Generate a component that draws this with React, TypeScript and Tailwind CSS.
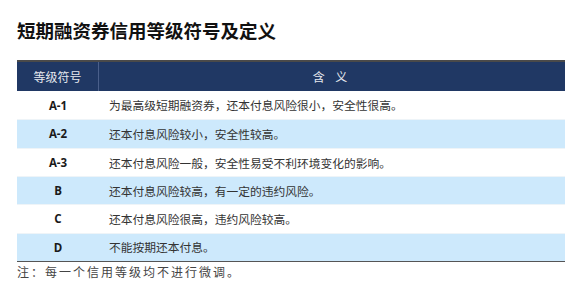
import React from "react";

const rows = [
  { g: "A-1", d: "为最高级短期融资券，还本付息风险很小，安全性很高。" },
  { g: "A-2", d: "还本付息风险较小，安全性较高。" },
  { g: "A-3", d: "还本付息风险一般，安全性易受不利环境变化的影响。" },
  { g: "B", d: "还本付息风险较高，有一定的违约风险。" },
  { g: "C", d: "还本付息风险很高，违约风险较高。" },
  { g: "D", d: "不能按期还本付息。" },
];

const cjk = { fontFamily: '"Noto Sans CJK SC", "Noto Sans", sans-serif' };

export default function App() {
  return (
    <div className="w-[584px] h-[288px] bg-white overflow-hidden" style={cjk}>
      <div className="pl-[17px] pt-[17px] h-[60px]">
        <h1 className="text-[18.5px] leading-[26px] font-bold text-[#111]">短期融资券信用等级符号及定义</h1>
      </div>
      <div className="ml-[17px] w-[548px] border-t-2 border-[#4a4a4a]">
        <div className="flex h-[29px] bg-[#203864] text-[#e6e9ef] text-[12px]">
          <div className="w-[82px] border-r border-[#4a5f8a] flex items-center justify-center">等级符号</div>
          <div className="flex-1 flex items-center justify-center tracking-[4px]">含 义</div>
        </div>
        {rows.map((r, i) => (
          <div
            key={r.g}
            className={`flex h-[28.33px] ${i % 2 === 1 ? "bg-[#cde9fc]" : "bg-white"} ${i > 0 ? "border-t border-[#eef4f8]" : ""}`}
          >
            <div
              className="w-[82px] flex items-center justify-center text-[11.5px] font-bold text-[#1a1a1a]"
              style={{ fontFamily: '"Open Sans", "Liberation Sans", sans-serif' }}
            >
              {r.g}
            </div>
            <div className="flex-1 flex items-center pl-[10px] text-[11.75px] text-[#333]">{r.d}</div>
          </div>
        ))}
        <div className="border-t border-[#555]" />
      </div>
      <div className="pl-[17px] pt-[1px] text-[12px] leading-[18px] text-[#444] tracking-[2px]">注：每一个信用等级均不进行微调。</div>
    </div>
  );
}
